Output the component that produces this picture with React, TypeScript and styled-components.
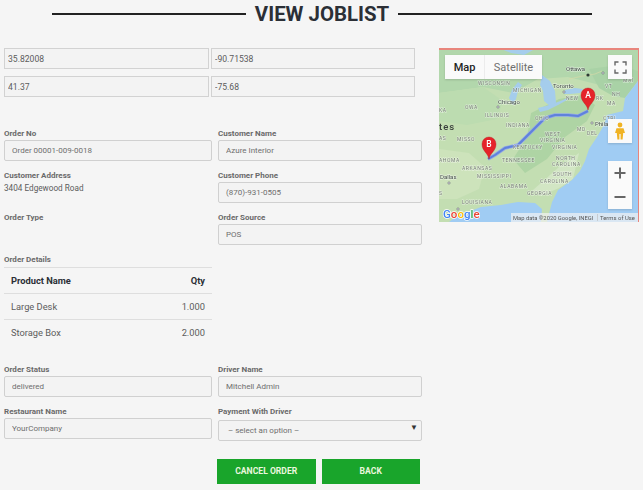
import React from 'react'
import styled, { createGlobalStyle } from 'styled-components'

const GlobalStyle = createGlobalStyle`
  html, body {
    margin: 0;
    padding: 0;
    background: #f5f5f5;
    font-family: Roboto, "Liberation Sans", sans-serif;
    overflow: hidden;
  }
  * { box-sizing: border-box; }
`

const Page = styled.div`
  width: 643px;
  height: 490px;
  padding: 0 3px 0 4px;
`

const TitleRow = styled.div`
  display: flex;
  justify-content: center;
  align-items: center;
  height: 28px;
  gap: 9px;
`

const TitleLine = styled.span`
  width: 194px;
  height: 2px;
  background: #222;
`

const Title = styled.h1`
  margin: 0;
  font-size: 20.4px;
  line-height: 28px;
  font-weight: 700;
  color: #2b2f36;
`

const Columns = styled.div`
  display: flex;
  margin-top: 20px;
`

const LeftCol = styled.div`
  width: 435px;
`

const CoordGrid = styled.div`
  display: grid;
  grid-template-columns: 205px 204px;
  column-gap: 2px;
  row-gap: 7px;
`

const CoordInput = styled.input`
  width: 100%;
  height: 21px;
  padding: 0 3px;
  border: 1px solid #d2d2d2;
  background: #f3f3f3;
  font: 400 8.6px Roboto, sans-serif;
  color: #5c5c5c;
  outline: none;
`

const FormGrid = styled.div<{ $top: number }>`
  display: grid;
  width: 418px;
  grid-template-columns: 208px 204px;
  column-gap: 6px;
  row-gap: 7px;
  margin-top: ${(p) => p.$top}px;
`

const Field = styled.div`
  display: flex;
  flex-direction: column;
`

const Label = styled.label`
  height: 14px;
  font-size: 8px;
  line-height: 15px;
  font-weight: 700;
  color: #6a6a6a;
`

const TextInput = styled.input`
  width: 100%;
  height: 21px;
  padding: 0 7px;
  border: 1px solid #d0d0d0;
  border-radius: 2px;
  background: #f3f3f3;
  font: 400 8px Roboto, sans-serif;
  color: #6e6e6e;
  outline: none;
`

const PlainValue = styled.div`
  font-size: 8.2px;
  line-height: 12px;
  color: #5c5c5c;
`

const DetailsBlock = styled.div`
  width: 208px;
  margin-top: 7px;
`

const DetailsLabel = styled(Label)`
  display: block;
  height: 15px;
  line-height: 15px;
`

const Table = styled.table`
  width: 100%;
  border-collapse: collapse;
  table-layout: fixed;
`

const HeadCell = styled.th<{ $right?: boolean }>`
  height: 26px;
  padding: 0 7px;
  border-top: 1px solid #dedede;
  font-size: 9.3px;
  font-weight: 700;
  color: #2b2f36;
  text-align: ${(p) => (p.$right ? 'right' : 'left')};
`

const Cell = styled.td<{ $right?: boolean }>`
  height: 26px;
  padding: 0 7px;
  border-top: 1px solid #dedede;
  font-size: 9.3px;
  color: #5c5c5c;
  text-align: ${(p) => (p.$right ? 'right' : 'left')};
`

const SelectWrap = styled.div`
  position: relative;
  &::after {
    content: '▼';
    position: absolute;
    right: 4px;
    top: 5px;
    font-size: 8px;
    line-height: 10px;
    color: #333;
  }
`

const Select = styled.select`
  width: 100%;
  height: 21px;
  padding: 0 9px;
  border: 1px solid #d0d0d0;
  border-radius: 2px;
  background: #f3f3f3;
  font: 400 8px Roboto, sans-serif;
  color: #6e6e6e;
  appearance: none;
  outline: none;
`

const Actions = styled.div`
  display: flex;
  gap: 6px;
  margin: 18px 0 0 213px;
`

const ActionButton = styled.button`
  width: 98.5px;
  height: 25px;
  padding: 0;
  border: none;
  background: #19a52b;
  color: #eaf7df;
  font: 700 8.6px Roboto, sans-serif;
  cursor: pointer;
`

const MapBox = styled.div`
  position: relative;
  width: 200px;
  height: 174px;
  overflow: hidden;
  border-top: 2px solid #e8857c;
  border-right: 1px solid #e8857c;
  background: #b9dcae;
`

const MapCanvas = styled.svg`
  display: block;
  margin-top: -1px;
  filter: blur(0.4px);
`

const MapTabs = styled.div`
  position: absolute;
  left: 6px;
  top: 5px;
  display: flex;
  height: 24px;
  background: #fafafa;
  box-shadow: 0 1px 2px rgba(0, 0, 0, 0.15);
`

const MapTab = styled.span<{ $active?: boolean }>`
  display: flex;
  align-items: center;
  justify-content: center;
  width: ${(p) => (p.$active ? 40 : 57)}px;
  font-size: 11px;
  font-weight: ${(p) => (p.$active ? 500 : 400)};
  color: ${(p) => (p.$active ? '#222' : '#6f6f6f')};
  border-right: ${(p) => (p.$active ? '1px solid #ececec' : 'none')};
`

const MapControl = styled.div<{ $top: number; $height: number }>`
  position: absolute;
  right: 6px;
  top: ${(p) => p.$top}px;
  display: flex;
  flex-direction: column;
  align-items: center;
  justify-content: center;
  width: 24px;
  height: ${(p) => p.$height}px;
  background: #fafafa;
  box-shadow: 0 1px 2px rgba(0, 0, 0, 0.15);
`

const ZoomStep = styled.span`
  display: flex;
  align-items: center;
  justify-content: center;
  height: 24px;
`

const StateLabel = styled.text`
  font-family: Roboto, sans-serif;
  font-size: 5px;
  letter-spacing: 0.6px;
  fill: #727a70;
  paint-order: stroke;
  stroke: #ffffff;
  stroke-opacity: 0.55;
  stroke-width: 1px;
`

const CityLabel = styled.text`
  font-family: Roboto, sans-serif;
  font-size: 6px;
  fill: #3f4a44;
  paint-order: stroke;
  stroke: #ffffff;
  stroke-opacity: 0.6;
  stroke-width: 1px;
`

const stateLabels: [number, number, string][] = [
  [39, 36, 'WISCONSIN'],
  [74, 43, 'MICHIGAN'],
  [26, 60, 'OWA'],
  [46, 68, 'ILLINOIS'],
  [67, 78, 'INDIANA'],
  [96, 71, 'OHIO'],
  [127, 51, 'NEW'],
  [157, 51, 'RK'],
  [168, 56, 'MA'],
  [164, 71, 'CTRI'],
  [166, 39, 'VT'],
  [173, 47, 'NH'],
  [184, 33, 'MAI'],
  [138, 82, 'MD'],
  [148, 86, 'DEL'],
  [106, 87, 'WEST'],
  [101, 93, 'VIRGINIA'],
  [113, 100, 'VIRGINIA'],
  [74, 100, 'KENTUCKY'],
  [18, 92, 'MISSO'],
  [63, 113, 'TENNESSEE'],
  [117, 111, 'NORTH'],
  [113, 117, 'CAROLINA'],
  [114, 127, 'SOUTH'],
  [101, 134, 'CAROLINA'],
  [0, 113, 'AHOMA'],
  [23, 121, 'ARKANSAS'],
  [38, 129, 'MISSISSIPPI'],
  [61, 139, 'ALABAMA'],
  [88, 146, 'GEORGIA'],
  [23, 155, 'LOUISIANA'],
  [0, 63, 'KA'],
  [0, 91, 'AS'],
  [0, 146, 'S'],
]

const cityLabels: [number, number, string][] = [
  [127, 22, 'Ottawa'],
  [114, 39, 'Toronto'],
  [59, 55, 'Chicago'],
  [156, 77, 'Phila'],
  [1, 130, 'Dallas'],
]

const cityDots: [number, number][] = [
  [125, 43],
  [164, 24],
  [59, 58],
  [153, 74],
  [10, 134],
  [19, 160],
]

function RoutePin({ x, y, letter }: { x: number; y: number; letter: string }) {
  return (
    <g>
      <path
        d={`M${x} ${y + 15}c-1-6-7-8-7-15a7 7 0 0 1 14 0c0 7-6 9-7 15z`}
        fill="#e5242a"
        stroke="#b8161c"
        strokeWidth="0.4"
      />
      <text x={x} y={y + 3} textAnchor="middle" fontFamily="Roboto" fontSize="8.5" fontWeight="500" fill="#fff">
        {letter}
      </text>
    </g>
  )
}

function RouteMap() {
  const route = 'M49 110L56 106 66 99 79 96 89 86 96 79 106 69 116 66 129 66 139 67 149 62'
  return (
    <MapCanvas width="199" height="173" viewBox="0 0 199 173">
      <rect width="199" height="173" fill="#c3deb2" />
      {/* forest and plain tones */}
      <path d="M0 0h199v30l-30 8-40-10-30 2-25 14-30-6L0 44z" fill="#b2d7ac" />
      <path d="M0 44l44-6 20 14-6 18-30 6-28-4z" fill="#bcdcb0" />
      <path d="M92 64l28-14 24-4 12 10-8 16-22 16-18 22-22 14-12-14 14-22z" fill="#aed4a4" />
      <path d="M150 20l30-4 19 6v10l-13 17-12-2-14-8z" fill="#a9d2a6" />
      <path d="M0 100l30 4 16 14-6 22-22 10H0z" fill="#cde3bb" />
      <path d="M120 118l20-14-6 26-14 9-18 8-8-6z" fill="#d2e6c4" />
      {/* ocean and gulf */}
      <path
        d="M199 32l-13 17-2 13-16 4-3 10-7 12-8 12-4 12-5 10-8 9-14 10-6 12-5 20h93z"
        fill="#a0ccf3"
      />
      <path d="M10 173l9-7 10-3 13-5 20-2 17-3 17 1 7 6-1 13z" fill="#a0ccf3" />
      {/* lakes */}
      <path d="M62 0l10 4 13 2 11-6z" fill="#a5cdec" />
      <path d="M79 33l-6 8-3 8 4 7 3-6 2-8 4-6z" fill="#a5cdec" />
      <path d="M103 26l8 6 5 10 1 12-6 3-6-5-1-10-3-6z" fill="#a5cdec" />
      <path d="M99 59l8-2 9-3 8-3 6-3-2 3-9 5-10 5-8 2z" fill="#a5cdec" />
      <path d="M126 41l10-2 8 1-3 4-10 1-6 0z" fill="#a5cdec" />
      <path d="M130 30l14-3 12-2 7-3" fill="none" stroke="#d5d8a8" strokeWidth="0.7" />
      <path d={route} fill="none" stroke="#93a8e6" strokeWidth="3.4" strokeLinejoin="round" />
      <path d={route} fill="none" stroke="#5f82dc" strokeWidth="2" strokeLinejoin="round" />
      {stateLabels.map(([x, y, text]) => (
        <StateLabel key={`${text}-${x}`} x={x} y={y}>
          {text}
        </StateLabel>
      ))}
      {cityLabels.map(([x, y, text]) => (
        <CityLabel key={text} x={x} y={y}>
          {text}
        </CityLabel>
      ))}
      {cityDots.map(([x, y]) => (
        <circle key={`${x}-${y}`} cx={x} cy={y} r="1.1" fill="#fff" stroke="#556" strokeWidth="0.6" />
      ))}
      <circle cx="149" cy="26" r="1.6" fill="#2c3a33" />
      <text x="0" y="81" fontFamily="Roboto" fontSize="9.5" fontWeight="500" fill="#3a3f3c" letterSpacing="1">
        tes
      </text>
      <RoutePin x={149} y={46} letter="A" />
      <RoutePin x={50} y={95} letter="B" />
      <text
        x="4"
        y="169"
        fontFamily="Roboto"
        fontSize="11.5"
        fontWeight="500"
        stroke="#fff"
        strokeWidth="1.4"
        style={{ paintOrder: 'stroke' }}
      >
        <tspan fill="#4285f4">G</tspan>
        <tspan fill="#ea4335">o</tspan>
        <tspan fill="#fbbc05">o</tspan>
        <tspan fill="#4285f4">g</tspan>
        <tspan fill="#34a853">l</tspan>
        <tspan fill="#ea4335">e</tspan>
      </text>
      <rect x="72" y="164" width="127" height="9" fill="#f2f2f2" fillOpacity="0.7" />
      <text x="74" y="171" fontFamily="Roboto" fontSize="5.8" fill="#555">
        Map data ©2020 Google, INEGI
      </text>
      <rect x="158" y="165" width="0.6" height="7" fill="#bbb" />
      <text x="161" y="171" fontFamily="Roboto" fontSize="5.9" fill="#555">
        Terms of Use
      </text>
    </MapCanvas>
  )
}

function MapPanel() {
  return (
    <MapBox>
      <RouteMap />
      <MapTabs>
        <MapTab $active>Map</MapTab>
        <MapTab>Satellite</MapTab>
      </MapTabs>
      <MapControl $top={5} $height={24}>
        <svg width="13" height="13" viewBox="0 0 13 13" fill="none" stroke="#666" strokeWidth="1.4">
          <path d="M1 4.5V1h3.5M8.5 1H12v3.5M12 8.5V12H8.5M4.5 12H1V8.5" />
        </svg>
      </MapControl>
      <MapControl $top={69} $height={24}>
        <svg width="10" height="18" viewBox="0 0 10 18" fill="#f0b324">
          <circle cx="5" cy="3" r="2.4" />
          <path d="M1.5 6.2h7L10 11H8.2l-.6 6.5H5.6V12h-1.2v5.5H2.4L1.8 11H0z" />
        </svg>
      </MapControl>
      <MapControl $top={111} $height={48}>
        <ZoomStep>
          <svg width="12" height="12" viewBox="0 0 12 12" fill="#666">
            <path d="M5 0.500h2v4.500h4.500v2H7v4.500H5V7H0.500V5H5z" />
          </svg>
        </ZoomStep>
        <ZoomStep>
          <svg width="12" height="12" viewBox="0 0 12 12" fill="#666">
            <path d="M0.500 5h11v2H0.500z" />
          </svg>
        </ZoomStep>
      </MapControl>
    </MapBox>
  )
}

const products = [
  { name: 'Large Desk', qty: '1.000' },
  { name: 'Storage Box', qty: '2.000' },
]

export default function App() {
  return (
    <Page>
      <GlobalStyle />
      <TitleRow>
        <TitleLine />
        <Title>VIEW JOBLIST</Title>
        <TitleLine />
      </TitleRow>
      <Columns>
        <LeftCol>
          <CoordGrid>
            <CoordInput readOnly value="35.82008" />
            <CoordInput readOnly value="-90.71538" />
            <CoordInput readOnly value="41.37" />
            <CoordInput readOnly value="-75.68" />
          </CoordGrid>
          <FormGrid $top={29}>
            <Field>
              <Label>Order No</Label>
              <TextInput readOnly value="Order 00001-009-0018" />
            </Field>
            <Field>
              <Label>Customer Name</Label>
              <TextInput readOnly value="Azure Interior" />
            </Field>
            <Field>
              <Label>Customer Address</Label>
              <PlainValue>3404 Edgewood Road</PlainValue>
            </Field>
            <Field>
              <Label>Customer Phone</Label>
              <TextInput readOnly value="(870)-931-0505" />
            </Field>
            <Field>
              <Label>Order Type</Label>
            </Field>
            <Field>
              <Label>Order Source</Label>
              <TextInput readOnly value="POS" />
            </Field>
          </FormGrid>
          <DetailsBlock>
            <DetailsLabel>Order Details</DetailsLabel>
            <Table>
              <thead>
                <tr>
                  <HeadCell>Product Name</HeadCell>
                  <HeadCell $right>Qty</HeadCell>
                </tr>
              </thead>
              <tbody>
                {products.map((p) => (
                  <tr key={p.name}>
                    <Cell>{p.name}</Cell>
                    <Cell $right>{p.qty}</Cell>
                  </tr>
                ))}
              </tbody>
            </Table>
          </DetailsBlock>
          <FormGrid $top={16}>
            <Field>
              <Label>Order Status</Label>
              <TextInput readOnly value="delivered" />
            </Field>
            <Field>
              <Label>Driver Name</Label>
              <TextInput readOnly value="Mitchell Admin" />
            </Field>
            <Field>
              <Label>Restaurant Name</Label>
              <TextInput readOnly value="YourCompany" />
            </Field>
            <Field>
              <Label>Payment With Driver</Label>
              <SelectWrap>
                <Select defaultValue="">
                  <option value="">– select an option –</option>
                </Select>
              </SelectWrap>
            </Field>
          </FormGrid>
          <Actions>
            <ActionButton>CANCEL ORDER</ActionButton>
            <ActionButton>BACK</ActionButton>
          </Actions>
        </LeftCol>
        <MapPanel />
      </Columns>
    </Page>
  )
}
